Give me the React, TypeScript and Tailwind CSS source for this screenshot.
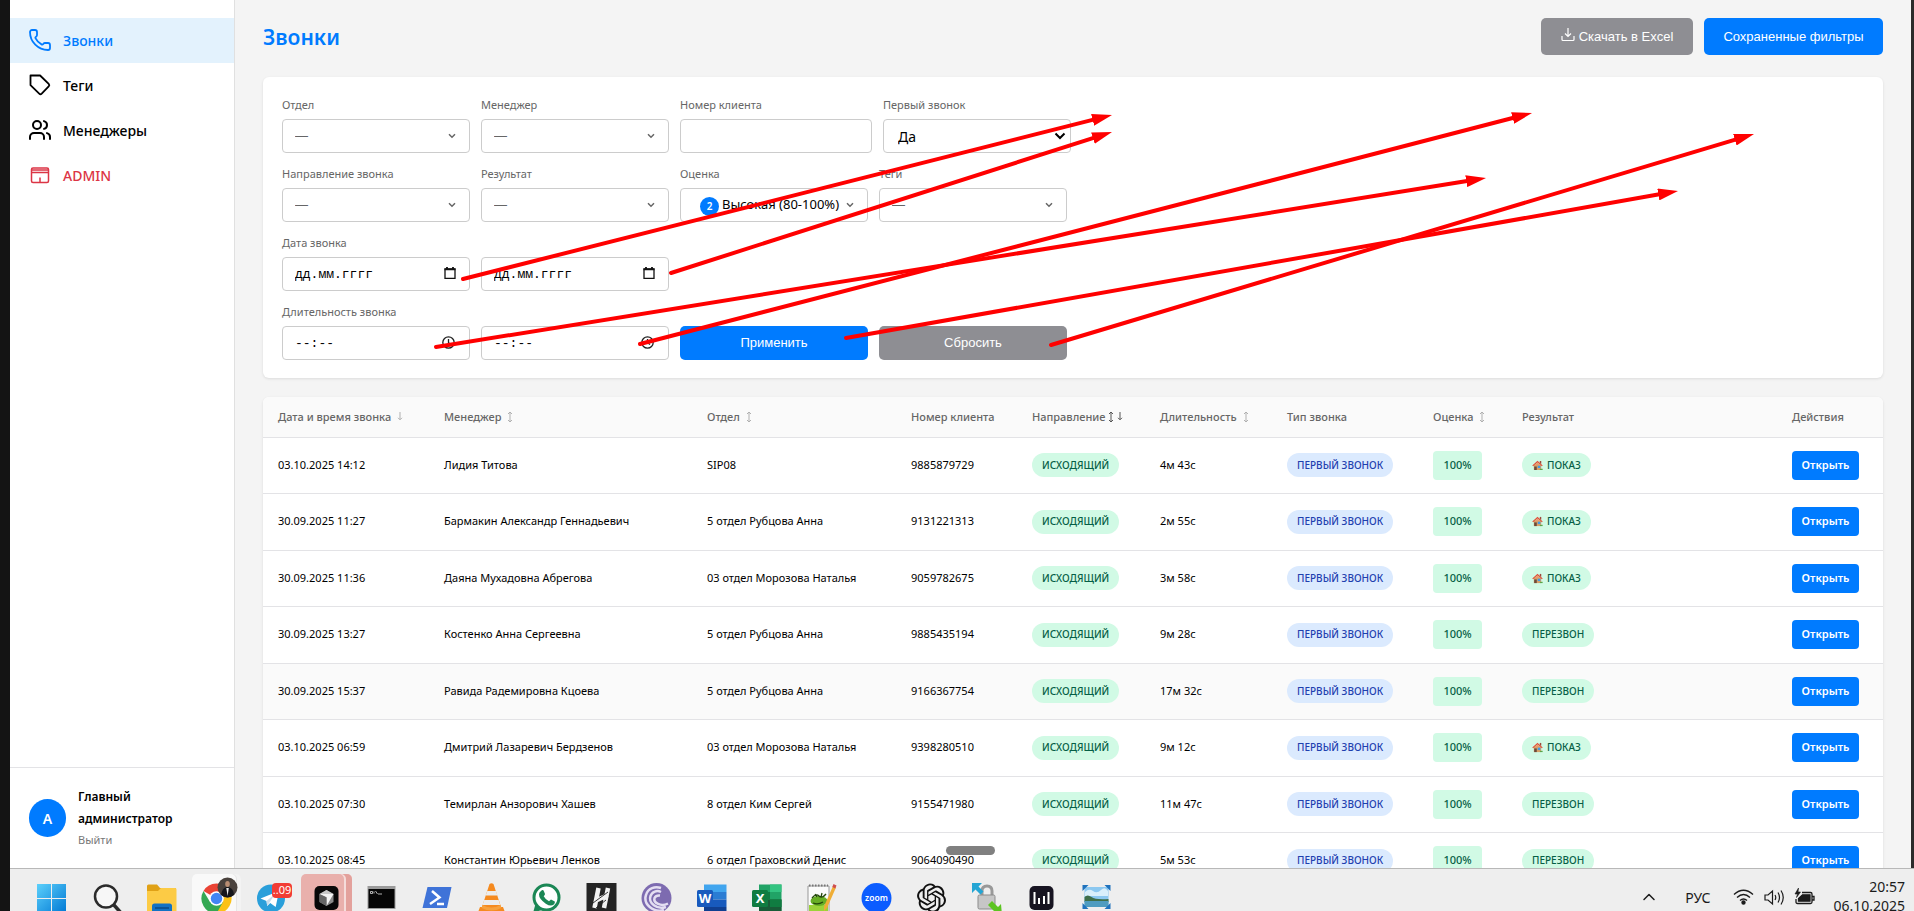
import React from "react";
import { Phone, Users, ChevronUp } from "lucide-react";

const fieldBox =
  "h-[34px] w-full appearance-none rounded-[4px] border border-[#cccccc] bg-white px-3 outline-none";

function Chevron({ dark = false }: { dark?: boolean }) {
  return dark ? (
    <svg className="pointer-events-none absolute right-[5px] top-3 h-[10px] w-[12px]" viewBox="0 0 12 10" fill="none" stroke="#000" strokeWidth="2">
      <path d="M1.5 2.5 6 7l4.5-4.5" />
    </svg>
  ) : (
    <svg className="pointer-events-none absolute right-[14px] top-[13px] h-2 w-2" viewBox="0 0 8 8" fill="none" stroke="#666" strokeWidth="1.5">
      <path d="M1 2.2 4 5.2l3-3" />
    </svg>
  );
}

function Field({ id, label, wide = false, children }: { id: string; label: string; wide?: boolean; children: React.ReactNode }) {
  return (
    <div className={wide ? "w-[192px]" : "w-[188px]"}>
      <label htmlFor={id} className="mb-[6px] block h-[17px] whitespace-nowrap text-[11px] leading-[17px] text-[#666]">
        {label}
      </label>
      <div className="relative">{children}</div>
    </div>
  );
}

function EmptySelect({ id }: { id: string }) {
  return (
    <>
      <select id={id} className={fieldBox + " font-['Liberation_Sans'] text-[13px] text-[#666]"}>
        <option>—</option>
      </select>
      <Chevron />
    </>
  );
}

function DateBox({ id, label }: { id: string; label?: string }) {
  return (
    <>
      <input
        id={id}
        aria-label={label}
        placeholder="дд.мм.гггг"
        className={fieldBox + " font-['Liberation_Mono',monospace] text-[13px] placeholder:text-black"}
      />
      <svg className="pointer-events-none absolute right-[14px] top-[10px] h-3 w-3" viewBox="0 0 12 12" fill="none" stroke="#111">
        <path d="M1 2h10v9.3H1z" strokeWidth="1.3" />
        <path d="M.5 2.4h11M3 0v2M9 0v2" strokeWidth="1.8" />
      </svg>
    </>
  );
}

function TimeBox({ id, label }: { id: string; label?: string }) {
  return (
    <>
      <input
        id={id}
        aria-label={label}
        placeholder="--:--"
        className={fieldBox + " font-['Liberation_Mono',monospace] text-[13px] placeholder:text-black"}
      />
      <svg className="pointer-events-none absolute right-[15px] top-[10px] h-[13px] w-[13px]" viewBox="0 0 13 13" fill="none" stroke="#222" strokeWidth="1.3">
        <circle cx="6.5" cy="6.5" r="5.7" />
        <path d="M6.5 3v3.7L9 8.6" />
      </svg>
    </>
  );
}

const columns = [
  { title: "Дата и время звонка", sort: "↓", width: "w-[166px]" },
  { title: "Менеджер", sort: "↕", width: "w-[263px]" },
  { title: "Отдел", sort: "↕", width: "w-[204px]" },
  { title: "Номер клиента", sort: "", width: "w-[121px]" },
  { title: "Направление", sort: "both", width: "w-[128px]" },
  { title: "Длительность", sort: "↕", width: "w-[127px]" },
  { title: "Тип звонка", sort: "", width: "w-[146px]" },
  { title: "Оценка", sort: "↕", width: "w-[89px]" },
  { title: "Результат", sort: "", width: "w-[270px]" },
  { title: "Действия", sort: "", width: "w-[106px]" },
];

const rows = [
  ["03.10.2025 14:12", "Лидия Титова", "SIP08", "9885879729", "4м 43с", "ПОКАЗ"],
  ["30.09.2025 11:27", "Бармакин Александр Геннадьевич", "5 отдел Рубцова Анна", "9131221313", "2м 55с", "ПОКАЗ"],
  ["30.09.2025 11:36", "Даяна Мухадовна Абрегова", "03 отдел Морозова Наталья", "9059782675", "3м 58с", "ПОКАЗ"],
  ["30.09.2025 13:27", "Костенко Анна Сергеевна", "5 отдел Рубцова Анна", "9885435194", "9м 28с", "ПЕРЕЗВОН"],
  ["30.09.2025 15:37", "Равида Радемировна Кцоева", "5 отдел Рубцова Анна", "9166367754", "17м 32с", "ПЕРЕЗВОН"],
  ["03.10.2025 06:59", "Дмитрий Лазаревич Бердзенов", "03 отдел Морозова Наталья", "9398280510", "9м 12с", "ПОКАЗ"],
  ["03.10.2025 07:30", "Темирлан Анзорович Хашев", "8 отдел Ким Сергей", "9155471980", "11м 47с", "ПЕРЕЗВОН"],
  ["03.10.2025 08:45", "Константин Юрьевич Ленков", "6 отдел Граховский Денис", "9064090490", "5м 53с", "ПЕРЕЗВОН"],
];

function SortArrow({ kind, dark = false }: { kind: string; dark?: boolean }) {
  return (
    <svg className="inline-block h-3 w-[6px]" viewBox="0 0 6 12" fill="none" stroke={dark ? "#555" : "#b0b0b0"}>
      {kind === "↓" ? (
        <path d="M3 1v7.5M1 6.8l2 2 2-2" />
      ) : (
        <path d="M3 1v10M1 3l2-2 2 2M1 9l2 2 2-2" />
      )}
    </svg>
  );
}

function House() {
  return (
    <svg className="h-[11px] w-[11px]" viewBox="0 0 12 12">
      <path d="M2 5h8v6H2z" fill="#d9a066" />
      <path d="M2.4 7h2.8v4H2.4z" fill="#6b4a3a" />
      <path d="M6.3 6.2h2.8v2.6H6.3z" fill="#3f9be8" />
      <path d="M8.5 1h1.6v3H8.5z" fill="#9a4a3c" />
      <path d="M.3 6 6 .9 11.7 6l-.9.8L6 2.7 1.2 6.8z" fill="#e0503c" />
      <path d="M2.6 5.4 6 2.6l3.4 2.8z" fill="#e89a6c" />
      <path d="M8.6 9.6h3V11h-3z" fill="#5aa54a" />
    </svg>
  );
}

const tag = "flex h-6 w-fit items-center rounded-xl px-[10px] text-[10px] font-medium whitespace-nowrap";

function CallsTable() {
  return (
    <table className="w-full table-fixed border-collapse text-left">
      <colgroup>
        {columns.map((c) => (
          <col key={c.title} className={c.width} />
        ))}
      </colgroup>
      <thead>
        <tr className="h-10 border-b border-[#e3e3e6] bg-[#fafafa]">
          {columns.map((c) => (
            <th key={c.title} className="pl-[15px] text-[11px] font-medium whitespace-nowrap text-[#666]">
              <span className="flex items-center">
                {c.title}
                {c.sort === "both" ? (
                  <span className="ml-[3px] flex gap-[3px]">
                    <SortArrow kind="↕" dark />
                    <SortArrow kind="↓" dark />
                  </span>
                ) : c.sort ? (
                  <span className="ml-[6px] flex">
                    <SortArrow kind={c.sort} />
                  </span>
                ) : null}
              </span>
            </th>
          ))}
        </tr>
      </thead>
      <tbody>
        {rows.map((r, i) => (
          <tr
            key={r[0]}
            className={"border-b border-[#e3e3e6] text-[11px] whitespace-nowrap text-black odd:h-14 even:h-[57px] " + (i === 4 ? "bg-[#fafafa]" : "")}
          >
            <td className="pl-[15px]">{r[0]}</td>
            <td className="pl-[15px]">{r[1]}</td>
            <td className="pl-[15px]">{r[2]}</td>
            <td className="pl-[15px]">{r[3]}</td>
            <td className="pl-[15px]">
              <span className={tag + " bg-[#d1fae5] text-[#065f46]"}>ИСХОДЯЩИЙ</span>
            </td>
            <td className="pl-[15px]">{r[4]}</td>
            <td className="pl-[15px]">
              <span className={tag + " bg-[#dbeafe] text-[#1e40af]"}>ПЕРВЫЙ ЗВОНОК</span>
            </td>
            <td className="pl-[15px]">
              <span className="flex h-[29px] w-[49px] items-center justify-center rounded-[4px] bg-[#d1fae5] font-medium text-[#065f46]">100%</span>
            </td>
            <td className="pl-[15px]">
              <span className={tag + " gap-1 bg-[#d1fae5] text-[#065f46]"}>
                {r[5] === "ПОКАЗ" && <House />}
                {r[5]}
              </span>
            </td>
            <td className="pl-[15px]">
              <button className="flex h-[29px] w-[67px] items-center justify-center rounded-[4px] bg-[#007bff] text-[11px] font-semibold text-white">
                Открыть
              </button>
            </td>
          </tr>
        ))}
      </tbody>
    </table>
  );
}

function Sidebar() {
  const item = "flex h-[45px] items-center gap-[11px] pb-px pl-[18px] text-[14px] font-medium";
  return (
    <aside className="flex w-[225px] shrink-0 flex-col border-r border-[#e0e0e0] bg-white pt-[18px]">
      <nav className="flex-1">
        <a href="#calls" className={item + " bg-[#e3f2fd] text-[#007bff]"}>
          <Phone size={24} strokeWidth={1.8} />
          Звонки
        </a>
        <a href="#tags" className={item + " text-black"}>
          <svg width="24" height="24" viewBox="0 0 24 24" fill="none" stroke="currentColor" strokeWidth="1.8" strokeLinejoin="round">
            <path d="M2.5 2.5h9.6l8.6 8.4a1.8 1.8 0 0 1 0 2.5l-7 7.2a1.8 1.8 0 0 1-2.5 0l-8.7-8.4z" />
          </svg>
          Теги
        </a>
        <a href="#managers" className={item + " text-black"}>
          <Users size={24} strokeWidth={2} />
          Менеджеры
        </a>
        <a href="#admin" className={item + " text-[#dc3545]"}>
          <svg width="24" height="24" viewBox="0 0 24 24" fill="none" stroke="currentColor" strokeWidth="1.5">
            <rect x="3.5" y="5" width="17" height="14.5" rx="1.5" />
            <path d="M3.5 7h17M3.5 9.5h17M12 14.5v5" />
          </svg>
          ADMIN
        </a>
      </nav>
      <div className="flex h-[101px] items-center gap-3 border-t border-[#e3e3e6] pl-[19px]">
        <div className="flex h-[38px] w-[37px] shrink-0 items-center justify-center rounded-full bg-[#007bff] text-[14px] font-semibold text-white">А</div>
        <div className="text-[12px] leading-[22px] font-semibold text-black">
          Главный
          <br />
          администратор
          <a href="#logout" className="block text-[11px] leading-5 font-normal text-[#777]">Выйти</a>
        </div>
      </div>
    </aside>
  );
}

function Filters() {
  return (
    <form className="flex flex-col gap-3 rounded-md bg-white px-[19px] pt-[19px] pb-[18px] shadow-[0_1px_3px_rgba(0,0,0,0.1)]">
      <div className="flex gap-[11px]">
        <Field id="dept" label="Отдел"><EmptySelect id="dept" /></Field>
        <Field id="manager" label="Менеджер"><EmptySelect id="manager" /></Field>
        <Field id="client" label="Номер клиента" wide>
          <input id="client" className={fieldBox + " text-[13px]"} />
        </Field>
        <Field id="first" label="Первый звонок">
          <select id="first" className={fieldBox + " pl-[14px] text-[14px] text-black"}>
            <option>Да</option>
          </select>
          <Chevron dark />
        </Field>
      </div>
      <div className="flex gap-[11px]">
        <Field id="direction" label="Направление звонка"><EmptySelect id="direction" /></Field>
        <Field id="result" label="Результат"><EmptySelect id="result" /></Field>
        <Field id="score" label="Оценка">
          <select id="score" className="h-[34px] w-full appearance-none rounded-[4px] border border-[#cccccc] bg-white pl-[41px] text-[13px] text-black outline-none">
            <option>Высокая (80-100%)</option>
          </select>
          <span className="absolute left-5 top-[9px] flex h-[19px] w-[19px] items-center justify-center rounded-full bg-[#007bff] text-[10px] font-semibold text-white">2</span>
          <Chevron />
        </Field>
        <Field id="tags" label="Теги"><EmptySelect id="tags" /></Field>
      </div>
      <div className="flex gap-[11px]">
        <Field id="date-from" label="Дата звонка"><DateBox id="date-from" /></Field>
        <div className="w-[188px] self-end"><div className="relative"><DateBox id="date-to" label="Дата звонка до" /></div></div>
      </div>
      <div className="flex items-end gap-[11px] font-['Liberation_Sans',sans-serif] text-[13px] text-white">
        <div className="font-['Noto_Sans',sans-serif]">
          <Field id="time-from" label="Длительность звонка"><TimeBox id="time-from" /></Field>
        </div>
        <div className="relative w-[188px]"><TimeBox id="time-to" label="Длительность звонка до" /></div>
        <button type="button" className="h-[34px] w-[188px] rounded-[5px] bg-[#007bff]">Применить</button>
        <button type="button" className="h-[34px] w-[188px] rounded-[5px] bg-[#8e8e93]">Сбросить</button>
      </div>
    </form>
  );
}

const appIcons: React.ReactNode[] = [
  <g key="win">
    <defs>
      <linearGradient id="win" x1="0" y1="0" x2="1" y2="1"><stop offset="0" stopColor="#5cd0fb" /><stop offset="1" stopColor="#0078d4" /></linearGradient>
    </defs>
    <path d="M1 1h14v14H1zM16 1h14v14H16zM1 16h14v14H1zM16 16h14v14H16z" fill="url(#win)" />
  </g>,
  <g key="search" fill="none" stroke="#2b2b2b">
    <circle cx="15" cy="13.5" r="11" strokeWidth="2.5" fill="#f7f7f7" />
    <path d="m22.5 21.5 8 9" strokeWidth="3.5" />
  </g>,
  <g key="files">
    <path d="M1 3q0-1.500 1.500-1.500H11L14 5h15q1 0 1 1v8H1z" fill="#e0a116" />
    <path d="M1 8h11l3-3h14q1.500 0 1.500 1.500V31H1z" fill="#fccb45" />
    <path d="M6 31v-8q0-2.500 2.500-2.500h15q2.500 0 2.500 2.500v8z" fill="#1272c4" />
    <path d="M9 25h14" stroke="#0b4a85" strokeWidth="1.5" />
  </g>,
  <g key="chrome">
    <path d="M15.500 15.500 2.500 8a15 15 0 0 1 26 0z" fill="#ea4335" />
    <path d="M15.500 15.500 28.500 8a15 15 0 0 1-13 22.500z" fill="#fbc116" />
    <path d="M15.500 30.500 22 19 9 19 2.500 8a15 15 0 0 0 13 22.500z" fill="#34a853" />
    <circle cx="15.5" cy="15.5" r="7.3" fill="#fff" />
    <circle cx="15.5" cy="15.5" r="5.7" fill="#4285f4" />
    <circle cx="26.5" cy="4.5" r="10" fill="#4a423d" />
    <path d="M20 12c1-6 4-8 6.500-8s6 2 6.500 8a10 10 0 0 1-13 0z" fill="#15161b" />
    <path d="M25.300 5h2.500l-1.200 8z" fill="#eee" />
    <ellipse cx="26.5" cy="1" rx="2.3" ry="3" fill="#b98d72" />
  </g>,
  <g key="telegram">
    <circle cx="15" cy="15.5" r="14" fill="#2a9fda" />
    <path d="m4.500 15.500 18.500-7.500-3.300 16-5.500-4-3 3-.7-5z" fill="#fff" />
    <path d="m10.500 18 8.500-7-5.500 8.500-2.300 3.500z" fill="#c8dcec" />
    <rect x="16" y="0" width="20" height="15" rx="4" fill="#f23c34" />
    <text x="26" y="11" textAnchor="middle" fontSize="11" fill="#fff" fontFamily="Noto Sans">..09</text>
  </g>,
  <g key="cursor">
    <rect x="3.5" y="3" width="24" height="24" rx="5" fill="#080808" />
    <path d="m15.500 7 7 4v8l-7 4-7-4v-8z" fill="#8b8b8b" />
    <path d="m8.500 11 7-4 7 4-7 3z" fill="#c9c9c9" />
    <path d="M8.500 11h14l-7 12v-9z" fill="#f4f4f4" />
    <path d="m8.500 11 7 3.500V23l-7-4z" fill="#666" />
  </g>,
  <g key="cmd">
    <rect x="1.5" y="3" width="28" height="23" fill="#9b9b9b" />
    <rect x="2.5" y="6" width="26" height="19" fill="#060606" />
    <path d="M4.500 8.500h2v2h-2zM8 8.500v2M9.500 8l2 3M12 11h4" stroke="#ddd" strokeWidth=".8" fill="none" />
  </g>,
  <g key="ps">
    <path d="M6.500 4h24L26 25H1.500z" fill="#3f73d8" />
    <path d="m11 8 7.500 6.500L9 21M16 21h7" fill="none" stroke="#fff" strokeWidth="2.5" />
  </g>,
  <g key="vlc">
    <path d="M13.500 1q2-1.500 4 0l8.500 26H5z" fill="#f58a1f" />
    <path d="m11.300 8 8.600 0 1.500 4.500H9.600zM8.200 17h14.500l1.500 5H6.500z" fill="#ececec" />
    <path d="M4 24h23l3 8H1z" fill="#f58a1f" />
    <path d="M6.500 22q9 5 18 0l1 3q-10 5-20 0z" fill="#f7a13d" />
  </g>,
  <g key="wa">
    <circle cx="15.5" cy="14.5" r="12.5" fill="#fff" stroke="#1b8755" strokeWidth="3" />
    <path d="m2 30 2.500-9 6 6z" fill="#1b8755" />
    <path d="M10 8q2-2 3 .5l1 2.500q0 1-1.300 2.300 2 3.700 5.300 5l2-1.800 3.800 2q.5 1.500-1 3-3 2.500-8-.8-7-5-6.800-9.500 0-2 2-3.200z" fill="#1b8755" />
  </g>,
  <g key="h">
    <path d="M.5 0h30v30H.5z" fill="#242424" />
    <path d="m8.500 25 4-20M18 25l4-20M9 18l13-6" stroke="#f2f2f2" strokeWidth="4.5" />
    <path d="m7 20 15-11M10 25l10-8" stroke="#242424" strokeWidth=".9" />
  </g>,
  <g key="bt">
    <circle cx="15.5" cy="15" r="15" fill="#7d6bb0" />
    <g fill="none" stroke="#e4def2" strokeWidth="2.5">
      <path d="M23 27C12 30 2 21 5 12 7 5 14 3 20 5" />
      <path d="M25 24C16 27 7 20 9.500 13 11 8.500 16 7 20 9" />
      <path d="M27 20.500C20 24 12 20 13.500 15q1.500-3 5.500-2.500" />
    </g>
  </g>,
  <g key="word">
    <path d="M8 1.500h22.500V9H8z" fill="#41a5ee" /><path d="M8 9h22.500v7.500H8z" fill="#2b7cd3" /><path d="M8 16.500h22.500V24H8z" fill="#185abd" /><path d="M8 24h22.500v7H8z" fill="#103f91" />
    <rect x="1" y="7" width="16" height="17" rx="1.5" fill="#185abd" />
    <text x="9" y="20" textAnchor="middle" fontSize="13" fontWeight="700" fill="#fff" fontFamily="Noto Sans">W</text>
  </g>,
  <g key="excel">
    <path d="M8 1.500h22.500V31H8z" fill="#21a366" /><path d="M19 1.500h11.500V9H19z" fill="#33c481" /><path d="M8 9h11v7.500H8z" fill="#107c41" /><path d="M8 16.500h22.500V31H8z" fill="#185c37" /><path d="M19 16.500h11.500V24H19z" fill="#107c41" />
    <rect x="1" y="7" width="16" height="17" rx="1.5" fill="#107c41" />
    <text x="9" y="20" textAnchor="middle" fontSize="13" fontWeight="700" fill="#fff" fontFamily="Noto Sans">X</text>
  </g>,
  <g key="npp">
    <path d="M2 3h21v27H2z" fill="#fbfbfb" stroke="#999" />
    <path d="M3 2.500h19" stroke="#777" strokeWidth="2" strokeDasharray="1.5 1.5" />
    <path d="M3 22h19v7H3z" fill="#9bd338" />
    <ellipse cx="13" cy="18" rx="8.5" ry="5" fill="#67ae25" />
    <path d="M6 15q4-5 7-2t7-2M7 20q5 2 10-1M9 11l2 3M16 10l-1 4" stroke="#24470b" fill="none" strokeWidth="1.3" />
    <path d="m27 3 3 1.500L21 25l-3 3v-4.500z" fill="#efad35" />
    <path d="m27.500 1 3 1.500-1.200 3-3-1.500z" fill="#cf4f4f" />
  </g>,
  <g key="zoom">
    <circle cx="15.5" cy="15" r="15" fill="#0b5cff" />
    <text x="15.5" y="18" textAnchor="middle" fontSize="8.5" fontWeight="600" fill="#fff" fontFamily="Noto Sans">zoom</text>
  </g>,
  <g key="gpt" transform="translate(1 0.5) scale(1.21)">
    <path d="M22.282 9.821a5.985 5.985 0 0 0-.516-4.910 6.046 6.046 0 0 0-6.510-2.900A6.065 6.065 0 0 0 4.981 4.182a5.985 5.985 0 0 0-3.998 2.900 6.046 6.046 0 0 0 .743 7.097 5.980 5.980 0 0 0 .510 4.911 6.051 6.051 0 0 0 6.515 2.900A5.985 5.985 0 0 0 13.260 24a6.056 6.056 0 0 0 5.772-4.206 5.990 5.990 0 0 0 3.998-2.900 6.056 6.056 0 0 0-.748-7.073zM13.260 22.430a4.476 4.476 0 0 1-2.876-1.041l.141-.081 4.779-2.758a.795.795 0 0 0 .393-.681v-6.737l2.020 1.169a.071.071 0 0 1 .038.052v5.583a4.504 4.504 0 0 1-4.495 4.494zM3.600 18.304a4.471 4.471 0 0 1-.535-3.014l.142.085 4.783 2.759a.771.771 0 0 0 .781 0l5.843-3.369v2.332a.080.080 0 0 1-.033.062L9.740 19.950a4.500 4.500 0 0 1-6.140-1.646zM2.341 7.896a4.485 4.485 0 0 1 2.366-1.973V11.600a.766.766 0 0 0 .388.677l5.815 3.355-2.020 1.168a.076.076 0 0 1-.071 0l-4.830-2.786A4.504 4.504 0 0 1 2.340 7.872zm16.597 3.855-5.833-3.387L15.119 7.200a.076.076 0 0 1 .071 0l4.830 2.791a4.494 4.494 0 0 1-.676 8.105v-5.678a.790.790 0 0 0-.407-.667zm2.010-3.023-.141-.085-4.774-2.782a.776.776 0 0 0-.785 0L9.409 9.230V6.897a.066.066 0 0 1 .028-.061l4.830-2.787a4.500 4.500 0 0 1 6.680 4.660zm-12.640 4.135-2.020-1.164a.080.080 0 0 1-.038-.057V6.075a4.500 4.500 0 0 1 7.375-3.453l-.142.080L8.704 5.460a.795.795 0 0 0-.393.681zm1.097-2.365 2.602-1.500 2.607 1.500v2.999l-2.597 1.500-2.607-1.500z" fill="#111" />
  </g>,
  <g key="lock">
    <path d="M11 13V8q0-5 5-5t5 5v5" fill="none" stroke="#999" strokeWidth="3" />
    <rect x="7" y="12" width="17" height="14" rx="1.5" fill="#c6c6c6" stroke="#8b8b8b" />
    <path d="M1 0h10L7.500 3.500l5 5-3 3-5-5L1 10z" fill="#24a5d4" />
    <path d="m31 32-11-1 3-3-6-6 4-4 6 6 3-3z" fill="#5cc421" />
  </g>,
  <g key="bars">
    <rect x="3.5" y="3" width="24" height="24" rx="5" fill="#171421" />
    <path d="M8.500 9v12M22.500 9v12M13 15v6M18 13v8" stroke="#fff" strokeWidth="2" />
  </g>,
  <g key="image">
    <path d="M3.500 4h24v20h-24z" fill="#8cc8f0" />
    <path d="M4 9q4-4 8-1t8-1 7 1v5H4z" fill="#d9effb" />
    <path d="M3.500 14q3-3 7 0t17 2v3h-24z" fill="#3f6f4a" /><path d="M3.500 18h24v6h-24z" fill="#4f9cc0" />
    <path d="M1.500 2h6l-6 6zM29.500 2v6l-6-6zM29.500 26h-6l6-6zM1.500 26v-6l6 6z" fill="#1f72bd" />
  </g>,
];

function Taskbar() {
  return (
    <footer className="flex h-[43px] shrink-0 overflow-hidden border-t border-[#b8b8b8] bg-[#eeeeee]">
      <div className="flex pl-[14px]">
        {appIcons.map((icon, i) => (
          <div key={i} className={"mt-[5px] flex h-[50px] w-[55px] " + (i === 3 ? "px-[3px]" : i === 5 ? "px-[2px]" : "")}>
            <div
              className={
                "flex h-full grow justify-center rounded-t-[5px] pt-[9px] " +
                (i === 3
                  ? "bg-[#f9f9f9] shadow-[inset_-4px_0_0_#f3f3f3,inset_-5px_0_0_#e6e6e6]"
                  : i === 5
                    ? "bg-[#e9b0ac] shadow-[inset_-6px_0_0_#e3a19c,inset_-8px_0_0_#f5dcda]"
                    : "")
              }
            >
              <svg className="h-[31px] w-[31px] overflow-visible" viewBox="0 0 31 31">{icon}</svg>
            </div>
          </div>
        ))}
      </div>
      <div className="ml-auto flex items-start text-[14px] text-[#1b1b1b]">
        <ChevronUp className="mt-[18px] mr-[26px]" size={20} strokeWidth={1.8} />
        <span className="mt-[19px] mr-[23px] leading-5">РУС</span>
        <svg className="mt-[20px] mr-[10px]" width="21" height="16" viewBox="0 0 21 16" fill="none" stroke="#1b1b1b" strokeWidth="1.4">
          <path d="M1 5.500q9.500-8.500 19 0M4 8.500q6.500-6 13 0M7 11.500q3.500-3.200 7 0" />
          <circle cx="10.5" cy="13.5" r="1.5" fill="#1b1b1b" />
        </svg>
        <svg className="mt-[20px] mr-[9px]" width="21" height="17" viewBox="0 0 21 17" fill="none" stroke="#1b1b1b" strokeWidth="1.2">
          <path d="M1 6h3l4.500-4v13L4 11H1zM11 6q1.500 2.500 0 5M14 3.500q3 5 0 10M17 1.500q4.500 7 0 14" />
        </svg>
        <svg className="mt-[19px] mr-[18px]" width="21" height="18" viewBox="0 0 21 18" fill="none" stroke="#1b1b1b" strokeWidth="1.3">
          <path d="M8 4.500h8.500q1.500 0 1.500 1.500v8q0 1.500-1.500 1.500H3.500Q2 15.500 2 14v-3M18.500 8.500h1.500v3.500h-1.500" />
          <path d="M8.500 6.800H16v6.400H4.500V10.500z" fill="#1b1b1b" />
          <path d="M4.500 0 1 6h2.500L2.500 9.500 6.500 4H4z" fill="#1b1b1b" strokeWidth=".6" />
        </svg>
        <div className="mt-2 pr-[9px] text-right leading-[19px]">
          20:57
          <br />
          06.10.2025
        </div>
      </div>
    </footer>
  );
}

const arrows = [
  [463, 279, 1112, 115],
  [671, 273, 1112, 132],
  [436, 347, 1486, 178],
  [640, 344, 1532, 113],
  [846, 338, 1678, 191],
  [1051, 345, 1754, 134],
];

function Annotations() {
  return (
    <svg className="pointer-events-none absolute top-0 left-0 h-[911px] w-[1914px]" viewBox="0 0 1914 911">
      <defs>
        <marker id="head" markerUnits="userSpaceOnUse" markerWidth="21" markerHeight="12" refX="4" refY="6" orient="auto">
          <path d="M0 0 20 6 0 12z" fill="#ff0000" />
        </marker>
      </defs>
      {arrows.map(([x1, y1, x2, y2], i) => {
        const len = Math.hypot(x2 - x1, y2 - y1);
        const k = (len - 16) / len;
        return (
          <path
            key={i}
            d={`M${x1} ${y1}L${x1 + (x2 - x1) * k} ${y1 + (y2 - y1) * k}`}
            stroke="#ff0000"
            strokeWidth="4"
            strokeLinecap="round"
            markerEnd="url(#head)"
          />
        );
      })}
    </svg>
  );
}

export default function App() {
  return (
    <div className="relative flex h-screen overflow-hidden bg-[#141414] pl-[10px] font-['Noto_Sans',sans-serif]">
      <div className="flex min-w-0 flex-1 flex-col">
        <div className="flex min-h-0 flex-1 border-r-[3px] border-[#2b2b2b] bg-[#f4f4f4]">
          <Sidebar />
          <main className="flex min-w-0 flex-1 flex-col overflow-hidden px-7 pt-[18px]">
            <header className="mb-[22px] flex items-center justify-between">
              <h1 className="text-[21px] leading-[30px] font-semibold text-[#007bff]">Звонки</h1>
              <div className="flex gap-[11px] font-['Liberation_Sans',sans-serif] text-[13px] text-white">
                <button className="flex h-[37px] w-[152px] items-center justify-center gap-1 rounded-[5px] bg-[#8e8e93]">
                  <svg className="mb-1" width="14" height="14" viewBox="0 0 14 14" fill="none" stroke="#fff" strokeWidth="1.2">
                    <path d="M7 0v8M4 5.500l3 3 3-3M1 8v3.500q0 1 1 1h10q1 0 1-1V8" />
                  </svg>
                  Скачать в Excel
                </button>
                <button className="h-[37px] w-[179px] rounded-[5px] bg-[#007bff]">Сохраненные фильтры</button>
              </div>
            </header>
            <Filters />
            <section className="mt-[19px] shrink-0 overflow-hidden rounded-t-md bg-white shadow-[0_1px_3px_rgba(0,0,0,0.1)]">
              <CallsTable />
            </section>
          </main>
        </div>
        <Taskbar />
      </div>
      <div className="absolute bottom-14 left-[946px] h-[9px] w-[49px] rounded-full bg-[#808080]" />
      <Annotations />
    </div>
  );
}
